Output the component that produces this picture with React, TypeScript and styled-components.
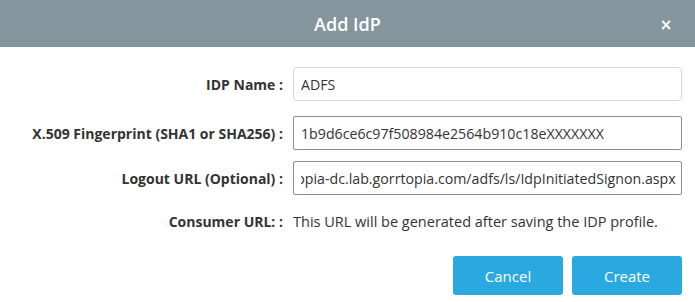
import React, { useEffect, useRef } from "react";
import styled, { createGlobalStyle } from "styled-components";

const Global = createGlobalStyle`
  html, body { margin: 0; padding: 0; background: #fff; }
  body { font-family: "Open Sans", "Liberation Sans", sans-serif; color: #333; }
  * { box-sizing: border-box; }
`;

const Modal = styled.div`
  width: 695px;
  height: 302px;
  background: #fff;
  display: flex;
  flex-direction: column;
`;

const Header = styled.div`
  height: 47px;
  background: #84959e;
  display: flex;
  align-items: center;
  justify-content: center;
  position: relative;
`;

const Title = styled.h1`
  margin: 0;
  font-size: 18px;
  font-weight: 600;
  color: #fff;
`;

const Close = styled.button`
  position: absolute;
  right: 22px;
  top: 18px;
  width: 14px;
  height: 14px;
  padding: 0;
  border: none;
  background: transparent;
  color: #fff;
  font-family: "DejaVu Sans", sans-serif;
  font-size: 15px;
  font-weight: 700;
  line-height: 14px;
  cursor: pointer;
`;

const Form = styled.div`
  display: grid;
  grid-template-columns: 283px 389px;
  column-gap: 10px;
  padding-top: 20px;
`;

const Label = styled.label<{ $mt?: number }>`
  justify-self: end;
  align-self: center;
  margin-top: ${(p) => p.$mt ?? 0}px;
  font-size: 14px;
  font-weight: 700;
  color: #333;
  white-space: nowrap;
`;

const Input = styled.input<{ $strong?: boolean; $mt?: number }>`
  height: 34px;
  width: 389px;
  margin-top: ${(p) => p.$mt ?? 0}px;
  padding: 0 5px 0 7px;
  font-family: "Open Sans", "Liberation Sans", sans-serif;
  font-size: 14.2px;
  color: #333;
  background: #fff;
  border: 1px solid ${(p) => (p.$strong ? "#8d8a9a" : "#d6d6d6")};
  border-radius: ${(p) => (p.$strong ? "2px" : "4px")};
  outline: none;
`;

const Info = styled.div<{ $mt?: number }>`
  margin-top: ${(p) => p.$mt ?? 0}px;
  font-size: 14.5px;
  color: #333;
  align-self: center;
  white-space: nowrap;
`;

const Actions = styled.div`
  display: flex;
  justify-content: flex-end;
  gap: 9px;
  padding: 25px 13px 0 0;
`;

const Button = styled.button`
  width: 110px;
  height: 39px;
  border: none;
  border-radius: 3px;
  background: #29a9e0;
  color: #fff;
  font-family: "Open Sans", "Liberation Sans", sans-serif;
  font-size: 15px;
  cursor: pointer;
`;

export default function App() {
  const logoutRef = useRef<HTMLInputElement>(null);
  useEffect(() => {
    const el = logoutRef.current;
    if (el) el.scrollLeft = el.scrollWidth;
  }, []);
  return (
    <>
      <Global />
      <Modal>
        <Header>
          <Title>Add IdP</Title>
          <Close aria-label="close">×</Close>
        </Header>
        <Form>
          <Label>IDP Name :</Label>
          <Input defaultValue="ADFS" />
          <Label $mt={15}>X.509 Fingerprint (SHA1 or SHA256) :</Label>
          <Input $strong $mt={15} defaultValue="1b9d6ce6c97f508984e2564b910c18eXXXXXXX" />
          <Label $mt={11}>Logout URL (Optional) :</Label>
          <Input
            ref={logoutRef}
            $strong
            $mt={11}
            defaultValue="https://gorrtopia-dc.lab.gorrtopia.com/adfs/ls/IdpInitiatedSignon.aspx"
          />
          <Label $mt={17}>Consumer URL: :</Label>
          <Info $mt={17}>This URL will be generated after saving the IDP profile.</Info>
        </Form>
        <Actions>
          <Button>Cancel</Button>
          <Button>Create</Button>
        </Actions>
      </Modal>
    </>
  );
}
